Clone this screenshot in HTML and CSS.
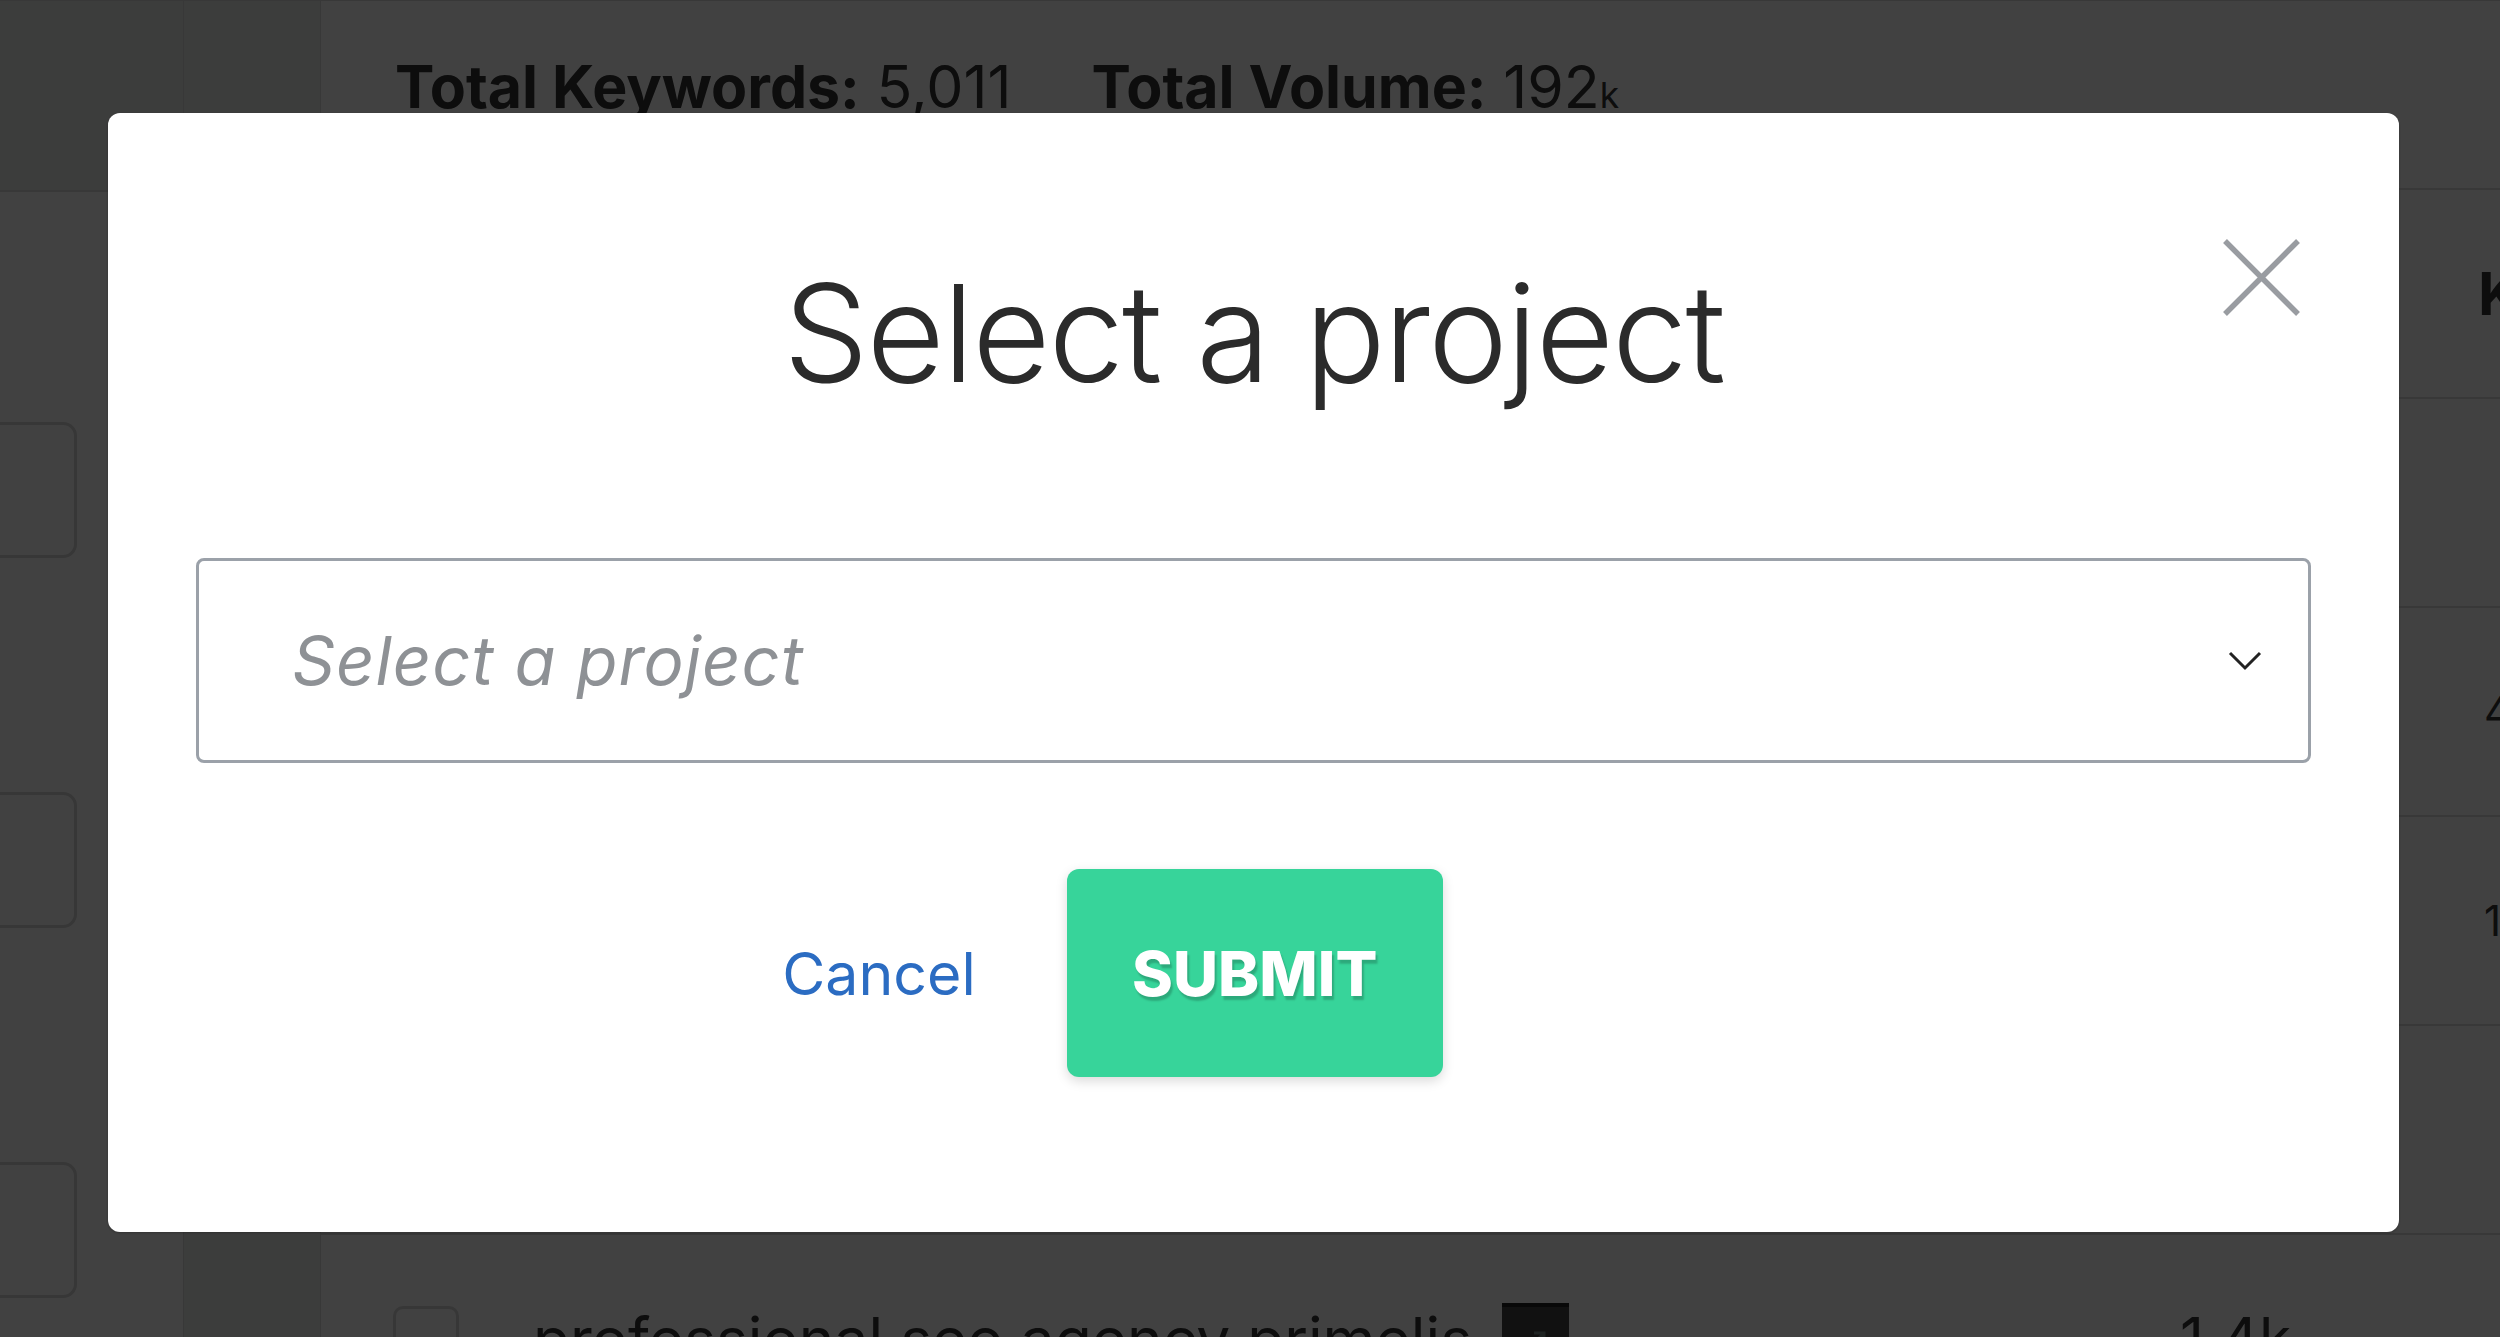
FILE: index.html
```html
<!DOCTYPE html>
<html lang="en">
<head>
    <meta charset="UTF-8">
    <meta name="viewport" content="width=device-width, initial-scale=1.0">
    <title>Select a project</title>
    <link rel="stylesheet" href="styles.css">
</head>
<body>
    <div class="page">
        <aside class="sidebar">
            <div class="sidebar-top"></div>
            <div class="filters">
                <div class="filter-box"></div>
                <div class="filter-box"></div>
                <div class="filter-box"></div>
            </div>
        </aside>
        <div class="rail"></div>

        <main class="main">
            <div class="totals">
                <span><b>Total Keywords:</b> 5,011</span>
                <span><b>Total Volume:</b> 192<small>k</small></span>
            </div>

            <!-- rows hidden behind the dialog keep only what peeks out on the right -->
            <div class="table">
                <div class="row head">
                    <div></div>
                    <div></div>
                    <div></div>
                    <div>KD</div>
                </div>
                <div class="row">
                    <div><span class="checkbox"></span></div>
                    <div></div>
                    <div></div>
                    <div class="kd"></div>
                </div>
                <div class="row">
                    <div><span class="checkbox"></span></div>
                    <div></div>
                    <div></div>
                    <div class="kd">42</div>
                </div>
                <div class="row">
                    <div><span class="checkbox"></span></div>
                    <div></div>
                    <div></div>
                    <div class="kd">18</div>
                </div>
                <div class="row">
                    <div><span class="checkbox"></span></div>
                    <div></div>
                    <div></div>
                    <div class="kd"></div>
                </div>
                <div class="row">
                    <div><span class="checkbox"></span></div>
                    <div class="keyword">
                        professional seo agency primelis
                        <span class="ext-link">
                            <svg width="40" height="40" viewBox="0 0 40 40"><path d="M14 26 L28 12 M18 12 H28 V22" fill="none" stroke="#7a8a86" stroke-width="3"/></svg>
                        </span>
                    </div>
                    <div>1.4k</div>
                    <div class="kd"></div>
                </div>
            </div>
        </main>
    </div>

    <!-- project picker dialog -->
    <div class="overlay">
        <div class="modal">
            <button class="close" aria-label="Close">
                <svg width="79" height="79" viewBox="0 0 79 79"><path d="M3 3 L76 76 M76 3 L3 76" stroke="#999ca1" stroke-width="5.5" fill="none"/></svg>
            </button>
            <h2 class="modal-title">Select a project</h2>
            <div class="select">
                <span class="placeholder">Select a project</span>
                <svg class="chevron" width="34" height="20" viewBox="0 0 34 20"><polyline points="2,2 17,17 32,2" fill="none" stroke="#222" stroke-width="3"/></svg>
            </div>
            <div class="actions">
                <a class="cancel" href="#">Cancel</a>
                <button class="submit">SUBMIT</button>
            </div>
        </div>
    </div>
</body>
</html>
```

FILE: styles.css
```css
html, body { margin: 0; padding: 0; }
body {
    width: 2500px;
    height: 1337px;
    overflow: hidden;
    font-family: Inter, "Noto Sans", sans-serif;
    color: #333;
    background: #fff;
}

/* page behind the dialog */
.page { display: flex; height: 1337px; border-top: 1px solid #dcdcdc; box-sizing: border-box; overflow: hidden; }
.sidebar { width: 183px; flex-shrink: 0; }
.sidebar-top { height: 189px; background: #ecefec; border-bottom: 2px solid #dcdcdc; }
.filters { display: flex; flex-direction: column; gap: 234px; padding-top: 230px; }
.filter-box {
    width: 77px;
    height: 136px;
    box-sizing: border-box;
    border: 3px solid #d6d6d6;
    border-left: none;
    border-radius: 0 14px 14px 0;
}
.rail {
    width: 136px;
    flex-shrink: 0;
    background: #ecefec;
    border-left: 1px solid #dcdcdc;
    border-right: 1px solid #dcdcdc;
}
.main { flex: 1; min-width: 0; overflow: hidden; }
.totals {
    height: 187px;
    box-sizing: border-box;
    padding: 50px 0 0 74px;
    display: flex;
    gap: 80px;
    font-size: 59px;
    white-space: nowrap;
}
.totals b { font-weight: 700; }
.totals small { font-size: 0.6em; }

.row {
    display: grid;
    grid-template-columns: 212px 1647px 298px 300px;
    height: 209px;
    box-sizing: border-box;
    border-top: 2px solid #dcdcdc;
    align-items: center;
    font-size: 59px;
    white-space: nowrap;
}
.row.head { font-weight: 700; }
.checkbox {
    display: block;
    width: 66px;
    height: 66px;
    box-sizing: border-box;
    margin-left: 72px;
    border: 3px solid #d8d8d8;
    border-radius: 10px;
}
.keyword { display: flex; align-items: center; gap: 30px; font-size: 60.5px; }
.ext-link {
    width: 67px;
    height: 67px;
    background: #444;
    border-top: 4px solid #222;
    display: flex;
    align-items: center;
    justify-content: center;
}
.kd { font-size: 42px; padding-left: 6px; }

/* dialog */
.overlay {
    position: fixed;
    inset: 0;
    background: rgba(0, 0, 0, 0.745);
    padding: 113px 0 0 108px;
}
.modal {
    position: relative;
    width: 2291px;
    height: 1119px;
    box-sizing: border-box;
    padding: 139px 88px 0;
    background: #fff;
    border-radius: 12px;
    box-shadow: 0 1px 3px rgba(0, 0, 0, 0.25);
}
.close {
    position: absolute;
    top: 125px;
    right: 98px;
    width: 79px;
    height: 79px;
    padding: 0;
    border: none;
    background: none;
    cursor: pointer;
}
.close svg { display: block; }
.modal-title {
    margin: 0;
    text-align: center;
    font-size: 135px;
    font-weight: 300;
    line-height: 1.2;
    letter-spacing: -2px;
    color: #2b2b2b;
}
.select {
    margin-top: 144px;
    height: 205px;
    box-sizing: border-box;
    border: 3px solid #9ba1a9;
    border-radius: 8px;
    display: flex;
    align-items: center;
    justify-content: space-between;
    padding: 0 46px 0 93px;
}
.placeholder {
    font-size: 67px;
    font-style: italic;
    letter-spacing: 1px;
    color: #8e9195;
}
.chevron { display: block; }
.actions {
    margin-top: 106px;
    display: flex;
    justify-content: center;
    align-items: center;
    gap: 91px;
    padding-right: 282px;
}
.cancel {
    font-size: 59px;
    color: #2b6cc2;
    text-decoration: none;
}
.submit {
    width: 376px;
    height: 208px;
    border: none;
    border-radius: 12px;
    background: #37d49a;
    color: #fff;
    font-family: Inter, "Noto Sans", sans-serif;
    font-size: 62px;
    font-weight: 800;
    text-shadow: 2px 4px 2px rgba(0, 0, 0, 0.2);
    box-shadow: 0 4px 12px rgba(0, 0, 0, 0.15);
    cursor: pointer;
}
```
